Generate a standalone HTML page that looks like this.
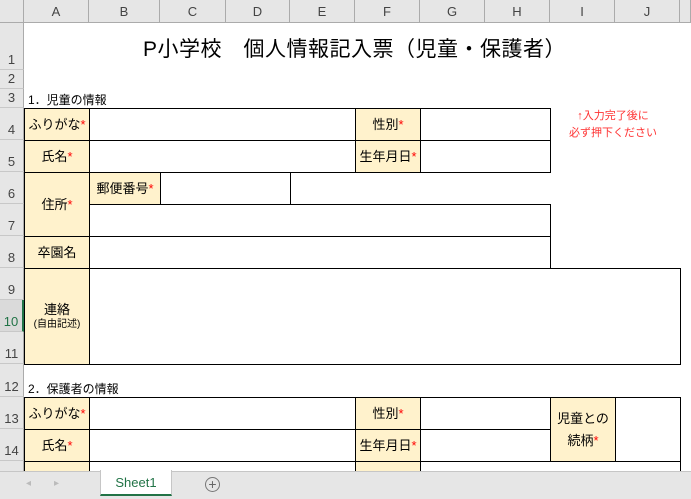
<!DOCTYPE html>
<html><head><meta charset="utf-8"><style>
*{margin:0;padding:0;box-sizing:border-box}
body{width:691px;height:499px;overflow:hidden;background:#fff;position:relative;font-family:"Liberation Sans","Noto Sans CJK JP",sans-serif;color:#000}
.a{position:absolute}
.ch{position:absolute;top:0;height:23px;background:#e6e6e6;border-right:1px solid #ababab;border-bottom:1px solid #ababab;font-size:13px;color:#444;text-align:center;line-height:23px}
.rh{position:absolute;left:0;width:24px;background:#e6e6e6;border-right:1px solid #ababab;border-bottom:1px solid #c8c8c8;font-size:13px;color:#444;text-align:center;display:flex;align-items:flex-end;justify-content:center;padding-bottom:2px}
.c{position:absolute;border:1px solid #000;font-size:13px;display:flex;align-items:center;justify-content:center;text-align:center;line-height:17px}
.l{background:#fff2cc}
.r{color:#f00}
</style></head><body>
<div class="ch" style="left:0;width:24px"></div>
<div class="ch" style="left:24px;width:65px">A</div>
<div class="ch" style="left:89px;width:71px">B</div>
<div class="ch" style="left:160px;width:66px">C</div>
<div class="ch" style="left:226px;width:64px">D</div>
<div class="ch" style="left:290px;width:65px">E</div>
<div class="ch" style="left:355px;width:65px">F</div>
<div class="ch" style="left:420px;width:65px">G</div>
<div class="ch" style="left:485px;width:65px">H</div>
<div class="ch" style="left:550px;width:65px">I</div>
<div class="ch" style="left:615px;width:65px">J</div>
<div class="ch" style="left:680px;width:11px"></div>

<div class="rh" style="top:23px;height:47px">1</div>
<div class="rh" style="top:70px;height:19px">2</div>
<div class="rh" style="top:89px;height:19px">3</div>
<div class="rh" style="top:108px;height:32px">4</div>
<div class="rh" style="top:140px;height:32px">5</div>
<div class="rh" style="top:172px;height:32px">6</div>
<div class="rh" style="top:204px;height:32px">7</div>
<div class="rh" style="top:236px;height:32px">8</div>
<div class="rh" style="top:268px;height:32px">9</div>
<div class="rh" style="top:300px;height:32px;background:#dadada;color:#217346;border-right:2px solid #217346">10</div>
<div class="rh" style="top:332px;height:32px">11</div>
<div class="rh" style="top:364px;height:33px">12</div>
<div class="rh" style="top:397px;height:32px">13</div>
<div class="rh" style="top:429px;height:32px">14</div>
<div class="rh" style="top:461px;height:12px"></div>

<div class="a" style="left:143px;top:33px;font-size:21px;letter-spacing:0.5px;white-space:nowrap">P小学校　個人情報記入票（児童・保護者）</div>
<div class="a" style="left:28px;top:91px;font-size:12px">1．児童の情報</div>
<div class="a" style="left:568px;top:108px;font-size:11px;color:#f33;line-height:17px;text-align:center;width:90px;white-space:nowrap">↑入力完了後に<br>必ず押下ください</div>

<div class="c l" style="left:24px;top:108px;width:66px;height:33px">ふりがな<span class="r">*</span></div>
<div class="c" style="left:89px;top:108px;width:267px;height:33px"></div>
<div class="c l" style="left:355px;top:108px;width:66px;height:33px">性別<span class="r">*</span></div>
<div class="c" style="left:420px;top:108px;width:131px;height:33px"></div>
<div class="c l" style="left:24px;top:140px;width:66px;height:33px">氏名<span class="r">*</span></div>
<div class="c" style="left:89px;top:140px;width:267px;height:33px"></div>
<div class="c l" style="left:355px;top:140px;width:66px;height:33px">生年月日<span class="r">*</span></div>
<div class="c" style="left:420px;top:140px;width:131px;height:33px"></div>
<div class="c l" style="left:24px;top:172px;width:66px;height:65px">住所<span class="r">*</span></div>
<div class="c l" style="left:89px;top:172px;width:72px;height:33px">郵便番号<span class="r">*</span></div>
<div class="c" style="left:160px;top:172px;width:131px;height:33px"></div>
<div class="c" style="left:290px;top:172px;width:261px;height:33px;border-right:none;border-bottom:none"></div>
<div class="c" style="left:89px;top:204px;width:462px;height:33px"></div>
<div class="c l" style="left:24px;top:236px;width:66px;height:33px">卒園名</div>
<div class="c" style="left:89px;top:236px;width:462px;height:33px"></div>
<div class="c l" style="left:24px;top:268px;width:66px;height:97px;flex-direction:column">連絡<span style="font-size:10px;line-height:14px">(自由記述)</span></div>
<div class="c" style="left:89px;top:268px;width:592px;height:97px"></div>

<div class="a" style="left:28px;top:380px;font-size:12px">2．保護者の情報</div>
<div class="c l" style="left:24px;top:397px;width:66px;height:33px">ふりがな<span class="r">*</span></div>
<div class="c" style="left:89px;top:397px;width:267px;height:33px"></div>
<div class="c l" style="left:355px;top:397px;width:66px;height:33px">性別<span class="r">*</span></div>
<div class="c" style="left:420px;top:397px;width:131px;height:33px"></div>
<div class="c l" style="left:550px;top:397px;width:66px;height:65px"><div style="line-height:22px">児童との<br>続柄<span class="r">*</span></div></div>
<div class="c" style="left:615px;top:397px;width:66px;height:65px"></div>
<div class="c l" style="left:24px;top:429px;width:66px;height:33px">氏名<span class="r">*</span></div>
<div class="c" style="left:89px;top:429px;width:267px;height:33px"></div>
<div class="c l" style="left:355px;top:429px;width:66px;height:33px">生年月日<span class="r">*</span></div>
<div class="c" style="left:420px;top:429px;width:131px;height:33px"></div>
<div class="c l" style="left:24px;top:461px;width:66px;height:20px"></div>
<div class="c" style="left:89px;top:461px;width:267px;height:20px"></div>
<div class="c l" style="left:355px;top:461px;width:66px;height:20px"></div>
<div class="c" style="left:420px;top:461px;width:261px;height:20px"></div>

<div class="a" style="left:0;top:471px;width:691px;height:28px;background:#e6e6e6;border-top:1px solid #c6c6c6"></div>
<div class="a" style="left:26px;top:478px;font-size:10px;color:#bbb">◂</div>
<div class="a" style="left:54px;top:478px;font-size:10px;color:#bbb">▸</div>
<div class="a" style="left:100px;top:470px;width:72px;height:26px;background:#fff;border-left:1px solid #c6c6c6;border-right:1px solid #c6c6c6;border-bottom:2px solid #217346;color:#217346;font-size:13px;text-align:center;line-height:26px">Sheet1</div>
<div class="a" style="left:205px;top:477px;width:15px;height:15px;border:1px solid #777;border-radius:50%;color:#666;font-size:14px;line-height:12px;text-align:center">+</div>
</body></html>
